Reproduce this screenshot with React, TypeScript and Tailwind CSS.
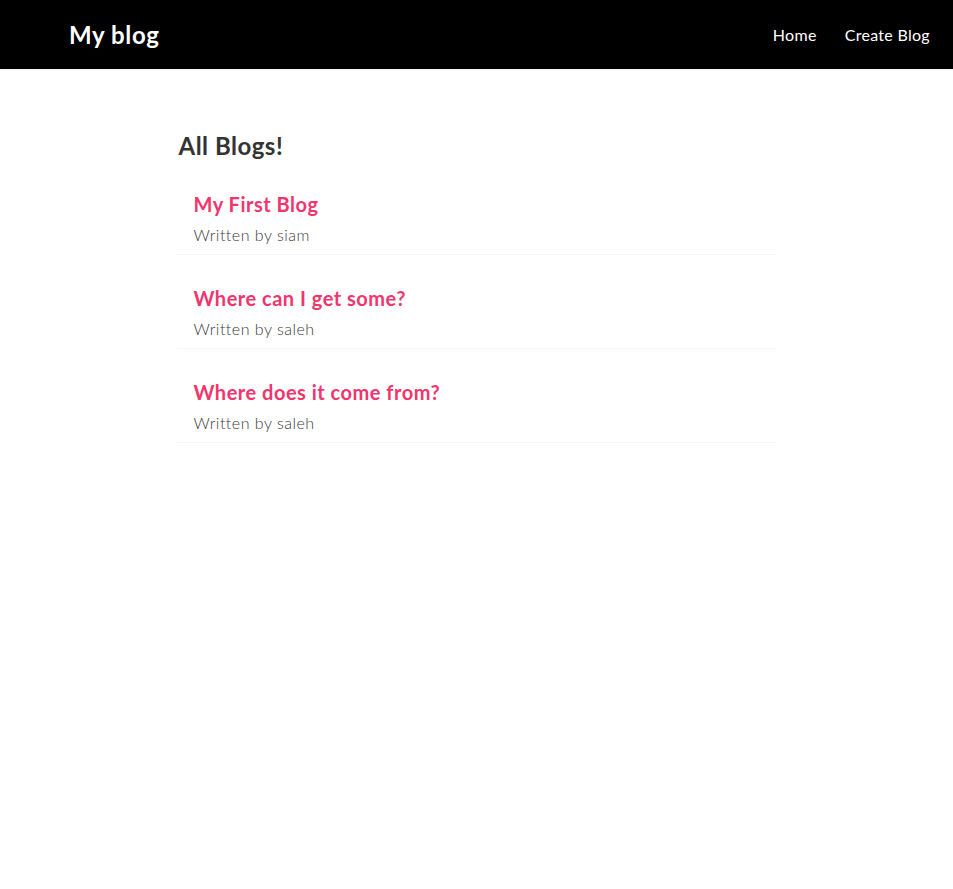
const blogs = [
  { id: 1, title: "My First Blog", author: "siam" },
  { id: 2, title: "Where can I get some?", author: "saleh" },
  { id: 3, title: "Where does it come from?", author: "saleh" },
];

function Navbar() {
  return (
    <nav className="flex items-center h-[70px] bg-black pl-[69px] pr-[17px] border-b border-[#f2f2f2]">
      <h1 className="text-[24px] leading-[30px] font-bold text-white tracking-[0.6px]">My blog</h1>
      <div className="ml-auto flex">
        <a href="#" className="ml-4 p-1.5 text-white text-base leading-[20px] tracking-[0.3px]">
          Home
        </a>
        <a href="#" className="ml-4 p-1.5 text-white text-base leading-[20px] tracking-[0.3px]">
          Create Blog
        </a>
      </div>
    </nav>
  );
}

export default function App() {
  return (
    <div className="min-h-screen bg-white text-[#333]" style={{ fontFamily: "Lato, 'Noto Sans', sans-serif" }}>
      <Navbar />
      <div className="max-w-[600px] mx-auto my-10 pt-[21px] pb-5">
        <h2 className="pl-0.5 text-[24px] leading-[30px] font-bold text-[#333] tracking-[0.5px]">All Blogs!</h2>
        <div className="flex flex-col gap-5 mt-5">
          {blogs.map((blog) => (
            <div key={blog.id} className="px-[17px] pt-[11px] pb-[9px] border-b border-[#f5f5f5]">
              <h2 className="text-[20px] leading-[25px] font-bold text-[#f1356d] mb-2 tracking-[0.5px]">
                {blog.title}
              </h2>
              <p className="text-base leading-[20px] font-light text-[#3a3a3a] tracking-[0.5px]">
                Written by {blog.author}
              </p>
            </div>
          ))}
        </div>
      </div>
    </div>
  );
}
